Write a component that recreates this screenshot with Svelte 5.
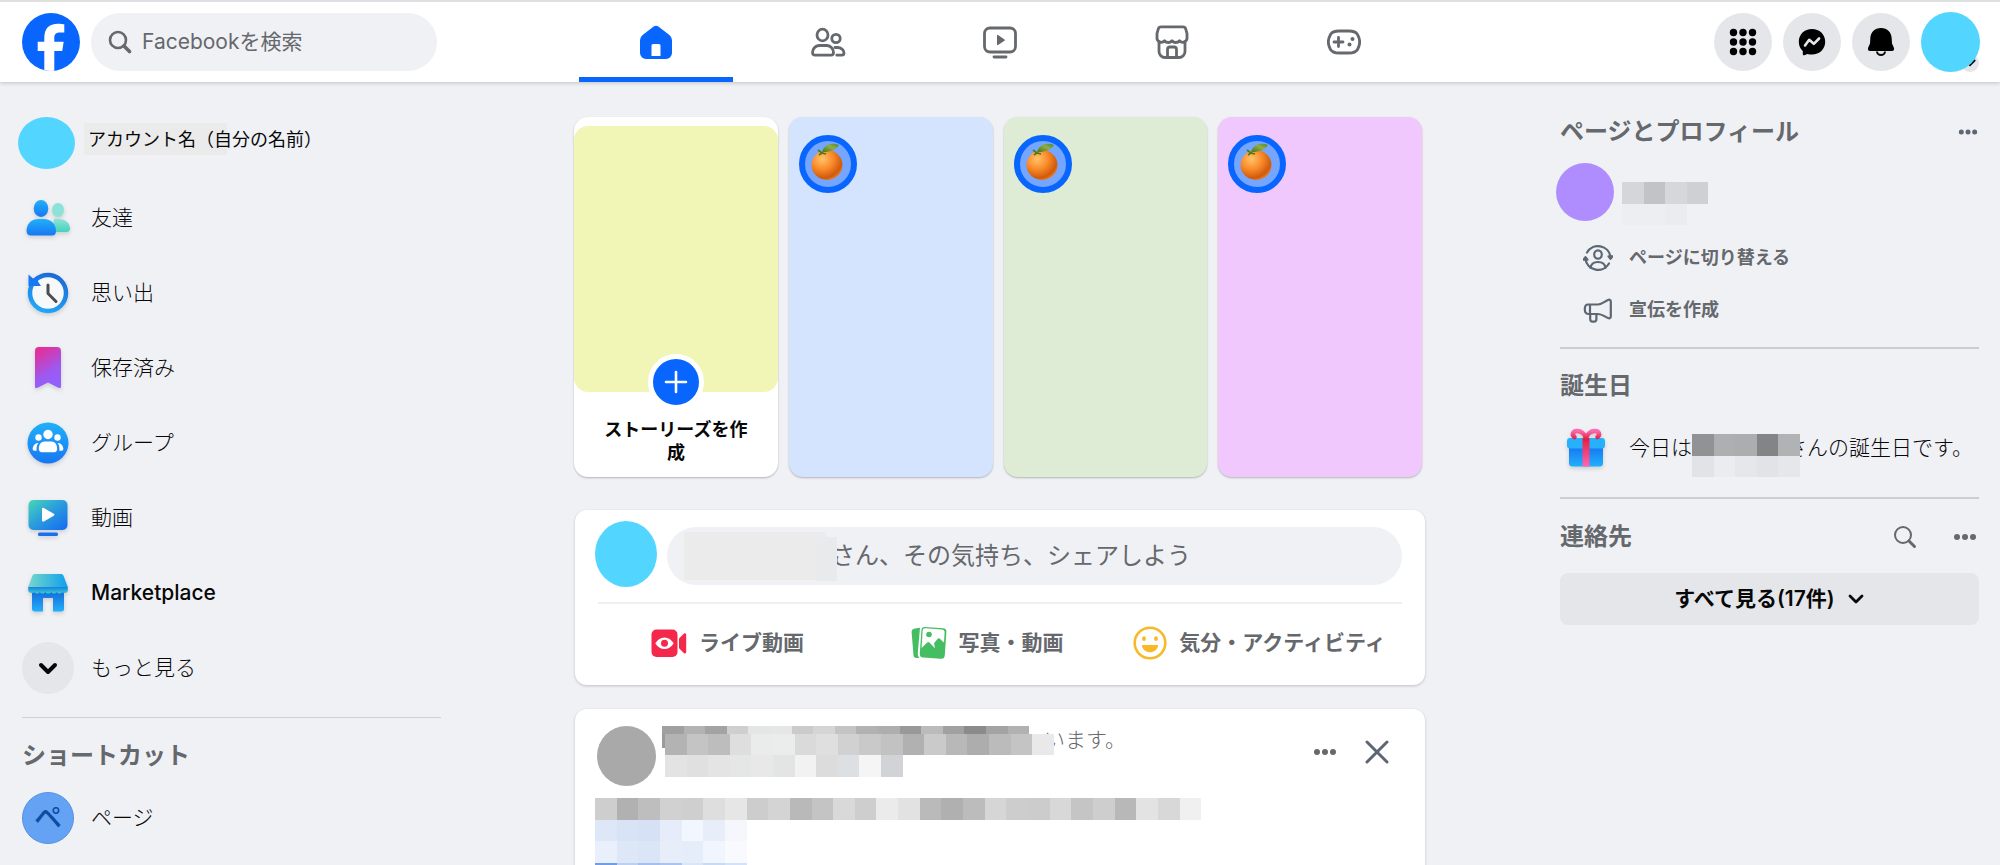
<script lang="ts">
  const menu = [
    { id: 'friends', label: '友達' },
    { id: 'memories', label: '思い出' },
    { id: 'saved', label: '保存済み' },
    { id: 'groups', label: 'グループ' },
    { id: 'video', label: '動画' },
    { id: 'market', label: 'Marketplace' },
    { id: 'more', label: 'もっと見る' }
  ];

  const tabs = [
    { id: 'home', label: 'ホーム' },
    { id: 'friends', label: '友達' },
    { id: 'video', label: '動画' },
    { id: 'market', label: 'Marketplace' },
    { id: 'games', label: 'ゲーム' }
  ];

  const stories = ['blue', 'green', 'pink'];

  // each row: x, y, height and the grey of every block
  const postName = [
    { x: 0, y: 0, h: 22, cells: ['#9b9b9b'], w: 3 },
    { x: 0, y: 0, h: 8, cells: ['#a0a0a0', '#b2b2b2', '#a3a3a3', '#cfcfcf', '#e3e6e5', '#e5e6e6', '#cbcbcb', '#d5d5d5', '#c4c4c4', '#b2b2b2', '#aeaeae', '#999', '#bbb', '#a1a1a1', '#8b8b8b', '#a3a3a3', '#b1b1b1'] },
    { x: 3, y: 8, h: 21, cells: ['#b3b3b3', '#c4c4c4', '#bdbdbd', '#dedede', '#eaeceb', '#ebecec', '#dadada', '#dfdfdf', '#d1d1d1', '#c9c9c9', '#c2c2c2', '#b1b1b1', '#cacaca', '#b8b8b8', '#adadad', '#bbb', '#c4c4c4', '#e9e9e9'] },
    { x: 3, y: 29, h: 22, cells: ['#e3e3e3', '#e0e0e0', '#e4e4e4', '#e5e7e6', '#e8e8e8', '#e2e5e4', '#f2f2f2', '#dcdcdc', '#dde0e2', '#f5f5f5', '#d2d3d6'] }
  ];

  const postBody = [
    { x: 0, y: 0, h: 22, cells: ['#cecece', '#b1b1b1', '#bebebe', '#d1d1d1', '#cfcfcf', '#dedede', '#e6e6e6', '#cdcdcd', '#d4d4d4', '#b9b9b9', '#c4c4c4', '#d9d9d9', '#cecece', '#ebebeb', '#e2e2e2', '#bababa', '#b0b0b0', '#bcbcbc', '#d6d6d6', '#cdcdcd', '#cccccc', '#d8d8d8', '#c5c5c5', '#cecece', '#b8b8b8', '#e3e3e3', '#d8d8d8', '#f0f0f0'] },
    { x: 0, y: 22, h: 21, cells: ['#dde7f8', '#d8e3f6', '#d6e1f6', '#e6ecf9', '#f2f6fe', '#e7edf9', '#f5f7fc'] },
    { x: 0, y: 43, h: 22, cells: ['#e9effb', '#dde7f7', '#dae6f7', '#e8edfa', '#e5ecfa', '#f1f5fe', '#f8fafe'] },
    { x: 0, y: 65, h: 21, cells: ['#6f9de6', '#bcd1f2', '#a3c0ef', '#a9c4f0', '#d9e5f8', '#c9daf5', '#d2e2fa'] }
  ];

  const pageName = [
    { x: 0, y: 0, h: 22, cells: ['#d5d6da', '#c2c3c6', '#d6d7da', '#cfd0d2'] },
    { x: 0, y: 22, h: 21, cells: ['#edeef1', '#edeef1', '#ebecef'] }
  ];

  const birthdayName = [
    { x: 0, y: 0, h: 22, cells: ['#919293', '#aeafb0', '#acadae', '#838485', '#b1b2b3'] },
    { x: 0, y: 22, h: 21, cells: ['#e2e3e6', '#ebecef', '#e6e7ea', '#e2e3e6', '#e6e7ea'] }
  ];

  let activeTab = 'home';
</script>

{#snippet blocks(rows, width, height, cell)}
  <svg class="blocks" {width} {height} viewBox="0 0 {width} {height}" shape-rendering="crispEdges" aria-hidden="true">
    {#each rows as row}
      {#each row.cells as color, i}
        <rect x={row.x + i * cell} y={row.y} width={row.w ?? cell} height={row.h} fill={color} />
      {/each}
    {/each}
  </svg>
{/snippet}

{#snippet searchIcon(width)}
  <svg width="24" height="24" viewBox="0 0 24 24" fill="none" stroke="#65686c" stroke-linecap="round">
    <circle cx="10" cy="10" r="8" stroke-width={width} />
    <path d="M16 16l5.500 5.500" stroke-width={width + 1} />
  </svg>
{/snippet}

{#snippet dots()}
  <svg width="24" height="8" viewBox="0 0 24 8">
    <circle cx="4" cy="4" r="3" /><circle cx="12" cy="4" r="3" /><circle cx="20" cy="4" r="3" />
  </svg>
{/snippet}

{#snippet orange()}
  <svg width="36" height="42" viewBox="0 0 36 42">
    <defs>
      <radialGradient id="peel" cx="0.35" cy="0.3" r="0.75">
        <stop offset="0" stop-color="#ffc46b" />
        <stop offset="0.45" stop-color="#fb8c2b" />
        <stop offset="0.85" stop-color="#cf5a0c" />
        <stop offset="1" stop-color="#ee7d1c" />
      </radialGradient>
      <linearGradient id="leaf" x1="0" y1="1" x2="1" y2="0">
        <stop offset="0" stop-color="#3f7212" />
        <stop offset="0.6" stop-color="#8fae4d" />
        <stop offset="1" stop-color="#4c8420" />
      </linearGradient>
    </defs>
    <ellipse cx="17" cy="25" rx="15.500" ry="15" fill="url(#peel)" />
    <path d="M12 13c1-8 9-11 17-8-3 5-9 7-15 7z" fill="url(#leaf)" />
    <path d="M8 10l4 3-3 2M12 13l4 1" fill="none" stroke="#4b7b18" stroke-width="1.600" />
  </svg>
{/snippet}

<div class="app">
  <header class="topbar">
    <div class="brand">
      <a class="logo" href="#home" aria-label="Facebook">
        <svg width="58" height="58" viewBox="0 0 58 58">
          <clipPath id="disc"><circle cx="29" cy="29" r="29" /></clipPath>
          <circle cx="29" cy="29" r="29" fill="#0866ff" />
          <path clip-path="url(#disc)" fill="#fff" d="M22.300 58V38h-6.600v-9.300h6.600V25c0-9.500 4.700-14.300 13.700-14.300 2.600 0 5 .3 6.300.6v8.200h-3.800c-4.500 0-6.200 1.500-6.200 5.500v3.700h9.400L40.200 38h-7.900v20z" />
        </svg>
      </a>
      <label class="search">
        {@render searchIcon(2.6)}
        <input type="text" placeholder="Facebookを検索" aria-label="Facebookを検索" />
      </label>
    </div>

    <nav class="tabs">
      {#each tabs as tab}
        <a class="tab" class:active={tab.id === activeTab} href="#{tab.id}" aria-label={tab.label}>
          {#if tab.id === 'home'}
            <svg width="34" height="34" viewBox="0 0 34 34">
              <path fill="#0866ff" fill-rule="evenodd" d="M14.300 1.800a4.500 4.500 0 0 1 5.400 0l10 7.700A8 8 0 0 1 33 15.800V28a6 6 0 0 1-6 6H7a6 6 0 0 1-6-6V15.800a8 8 0 0 1 3.300-6.300zM14 19a1.500 1.500 0 0 0-1.500 1.500V31h9V20.500A1.500 1.500 0 0 0 20 19z" />
            </svg>
          {:else if tab.id === 'friends'}
            <svg class="line" width="36" height="34" viewBox="0 0 36 34">
              <ellipse cx="12.500" cy="10" rx="5.500" ry="5.800" />
              <circle cx="26" cy="13.500" r="4.200" />
              <path d="M9 20.500h8a7 7 0 0 1 6.500 7c0 1.800-1 2.700-2.500 2.700H5c-1.500 0-2.500-.9-2.500-2.700a7 7 0 0 1 6.500-7zM25 22.500h2.500c3.500 0 6.500 2.500 6.500 5.500 0 1.400-.8 2.200-2.200 2.200h-5" />
            </svg>
          {:else if tab.id === 'video'}
            <svg class="line" width="34" height="34" viewBox="0 0 34 34">
              <rect x="1.500" y="3" width="31" height="24" rx="5.500" />
              <path d="M11 32h12" />
              <path class="solid" d="M14 10.500v9a.6.6 0 0 0 1 .5l6.500-4.300a.8.8 0 0 0 0-1.300L15 10a.6.6 0 0 0-1 .5z" />
            </svg>
          {:else if tab.id === 'market'}
            <svg class="line" width="34" height="34" viewBox="0 0 34 34">
              <path d="M6 1.800h22a2.800 2.800 0 0 1 2.700 2L32 8.500v4a4.300 4.300 0 0 1-7.500 3.300 5 5 0 0 1-7.500 0 5 5 0 0 1-7.500 0A4.300 4.300 0 0 1 2 12.500v-4L3.300 3.800A2.800 2.800 0 0 1 6 1.800z" />
              <path d="M4 17v9.500a6 6 0 0 0 6 6h14a6 6 0 0 0 6-6V17M12.500 32v-7.500a2.500 2.500 0 0 1 2.500-2.500h4a2.500 2.500 0 0 1 2.500 2.500V32" />
            </svg>
          {:else}
            <svg class="line" width="34" height="26" viewBox="0 0 34 26">
              <path d="M12 2h10c5 0 7 1 8.500 3.500 2.600 4.500 2.600 10.500 0 15C29 23 27 24 22 24H12c-5 0-7-1-8.500-3.500-2.600-4.500-2.600-10.500 0-15C5 3 7 2 12 2zM11.500 8.500v9M7 13h9" />
              <circle class="solid" cx="25.500" cy="10" r="2" />
              <circle class="solid" cx="22.500" cy="15.500" r="2" />
            </svg>
          {/if}
        </a>
      {/each}
    </nav>

    <div class="actions">
      <button class="round" aria-label="メニュー">
        <svg width="28" height="28" viewBox="0 0 28 28">
          {#each [4.5, 14, 23.5] as y}
            {#each [4.5, 14, 23.5] as x}
              <circle cx={x} cy={y} r="3.700" />
            {/each}
          {/each}
        </svg>
      </button>
      <button class="round" aria-label="Messenger">
        <svg width="28" height="28" viewBox="0 0 28 28">
          <path d="M14 1C6.500 1 .8 6.400.8 13.800c0 3.800 1.500 7 4 9.300V26c0 1 .7 1.500 1.600 1.200l3-1.300c1.400.5 3 .7 4.600.7 7.500 0 13.200-5.400 13.200-12.800S21.500 1 14 1z" />
          <path d="M7 17.500l4.200-5.700 4.600 4 5.300-5.300" fill="none" stroke="#e4e6ea" stroke-width="2.600" stroke-linecap="round" stroke-linejoin="round" />
        </svg>
      </button>
      <button class="round" aria-label="お知らせ">
        <svg width="28" height="30" viewBox="0 0 28 30">
          <path d="M14 1C7.500 1 3.500 5.500 3.300 11.500L3 16.500l-1.900 4.300C.5 22.500 1.200 24 3 24h22c1.800 0 2.500-1.500 1.900-3.200L25 16.500l-.3-5C24.500 5.500 20.500 1 14 1z" />
          <path d="M10 24.500a4 3.500 0 0 0 8 0" fill="none" stroke="#080809" stroke-width="2" />
        </svg>
      </button>
      <button class="profile" aria-label="アカウント">
        <span class="badge">
          <svg width="18" height="18" viewBox="0 0 18 18" fill="none" stroke="#080809" stroke-width="2.200" stroke-linecap="round"><path d="M4.500 6.500l4.500 4.500 4.500-4.500" /></svg>
        </span>
        <span class="face"></span>
      </button>
    </div>
  </header>

  <div class="page">
    <aside class="left">
      <a class="row account" href="#me">
        <span class="slot"><span class="avatar wide"></span></span>
        <span class="name"><span>アカウント名（自分の名前）</span></span>
      </a>
      {#each menu as item}
        <a class="row" href="#{item.id}">
          <span class="slot" class:disc={item.id === 'more'}>
            {#if item.id === 'friends'}
              <svg class="shade" width="46" height="38" viewBox="0 0 46 38">
                <defs>
                  <linearGradient id="sky" x1="0" y1="0" x2="0" y2="1"><stop offset="0" stop-color="#20b0fb" /><stop offset="1" stop-color="#1877f2" /></linearGradient>
                  <linearGradient id="mint" x1="0" y1="0" x2="0" y2="1"><stop offset="0" stop-color="#8fe0d8" /><stop offset="1" stop-color="#42d5ba" /></linearGradient>
                </defs>
                <ellipse cx="33" cy="11" rx="6" ry="7" fill="#8ae3d6" />
                <path d="M29 20h5c6 0 11 4 11 9.500 0 2-1.200 3.500-3.500 3.500H27z" fill="url(#mint)" />
                <ellipse cx="16" cy="9.500" rx="7.300" ry="8.500" fill="url(#sky)" />
                <path d="M13 20h6c7 0 12 5 12 12 0 3-1.500 4.500-4 4.500H6c-2.500 0-4.500-1.500-4.500-4.500 0-7 4.500-12 11.500-12z" fill="url(#sky)" />
              </svg>
            {:else if item.id === 'memories'}
              <svg class="shade" width="42" height="42" viewBox="0 0 42 42">
                <defs>
                  <linearGradient id="clock" x1="0.700" y1="0" x2="0.300" y2="1"><stop offset="0" stop-color="#1a6bd8" /><stop offset="1" stop-color="#20a7f8" /></linearGradient>
                </defs>
                <circle cx="21" cy="21" r="18" fill="#f7f8fa" stroke="url(#clock)" stroke-width="4.500" />
                <path d="M1.500 2.500l4.500 4 5-3v6l3 4.500H1.500z" fill="#1877f2" />
                <path d="M21 13v8.500l8 8" fill="none" stroke="#4b4c4f" stroke-width="3" stroke-linecap="round" />
              </svg>
            {:else if item.id === 'saved'}
              <svg class="shade" width="28" height="44" viewBox="0 0 28 44">
                <defs>
                  <linearGradient id="ribbon" x1="0.300" y1="0" x2="0.700" y2="1"><stop offset="0" stop-color="#e62e9a" /><stop offset="0.650" stop-color="#9a5bf3" /><stop offset="1" stop-color="#9260fc" /></linearGradient>
                </defs>
                <path d="M5 1h18a4 4 0 0 1 4 4v35.500c0 1.500-1 2-2.500 1.300L14 36.500 3.500 41.800C2 42.500 1 42 1 40.500V5a4 4 0 0 1 4-4z" fill="url(#ribbon)" />
              </svg>
            {:else if item.id === 'groups'}
              <svg class="shade" width="42" height="42" viewBox="0 0 42 42">
                <circle cx="21" cy="21" r="20.500" fill="url(#sky)" />
                <g fill="#fff">
                  <circle cx="21" cy="12.500" r="4.700" />
                  <circle cx="11.500" cy="15.500" r="3.200" /><circle cx="30.500" cy="15.500" r="3.200" />
                  <path d="M17.500 19.500h7c3.500 0 5.700 3 5.700 7.500 0 2-.8 3.200-3 3.200H15c-2.200 0-3.200-1.200-3.200-3.200 0-4.500 2.200-7.500 5.700-7.500zM11.500 21c-1.700 2-2.300 4.500-1.800 7.800H7.500c-1.500 0-2-1-1.800-2.500C6.200 23 8.300 21 11.500 21zM30.500 21c1.700 2 2.300 4.500 1.800 7.800h2.200c1.500 0 2-1 1.800-2.500-.5-3.300-2.600-5.300-5.800-5.300z" />
                </g>
              </svg>
            {:else if item.id === 'video'}
              <svg class="shade" width="40" height="38" viewBox="0 0 40 38">
                <defs>
                  <linearGradient id="screen" x1="0" y1="0" x2="1" y2="1"><stop offset="0" stop-color="#46d8b8" /><stop offset="0.450" stop-color="#2c9fdb" /><stop offset="1" stop-color="#1469f2" /></linearGradient>
                </defs>
                <rect x="0.500" y="1" width="39" height="30" rx="5" fill="url(#screen)" />
                <rect x="10" y="33.500" width="20" height="3.500" rx="1.500" fill="#1a6ff0" />
                <path d="M14 10v11.500c0 1 1 1.500 1.800 1l10-5.700a1.200 1.200 0 0 0 0-2.100l-10-5.700c-.8-.5-1.800 0-1.800 1z" fill="#fff" />
              </svg>
            {:else if item.id === 'market'}
              <svg class="shade" width="42" height="40" viewBox="0 0 42 40">
                <defs>
                  <linearGradient id="awning" x1="0" y1="0" x2="1" y2="0"><stop offset="0" stop-color="#74d8c8" /><stop offset="1" stop-color="#0f9fee" /></linearGradient>
                  <linearGradient id="walls" x1="0" y1="0" x2="0" y2="1"><stop offset="0" stop-color="#1565d8" /><stop offset="1" stop-color="#20b0fb" /></linearGradient>
                  <linearGradient id="edge" x1="0" y1="0" x2="0" y2="1"><stop offset="0" stop-color="#1a7ce8" /><stop offset="1" stop-color="#38d0c8" /></linearGradient>
                </defs>
                <path d="M5 17h32v19c0 1.500-.8 2.500-2.500 2.500H26V25H16v13.500H8c-2 0-3-1-3-2.500z" fill="url(#walls)" />
                <path d="M1.200 14h39.600v4c-.5 2-4.500 3-5.500 1-1 2-4.500 2-5.500 0-1 2-4.500 2-5.500 0-1 2-5 2-6 0-1 2-4.500 2-5.500 0-1 2-4.500 2-5.500 0-1 2-5.500 1-6-1z" fill="url(#edge)" />
                <path d="M8 1h26c1.200 0 2 .6 2.400 1.600L40.800 14H1.200L5.600 2.600C6 1.600 6.800 1 8 1z" fill="url(#awning)" />
              </svg>
            {:else}
              <svg width="24" height="24" viewBox="0 0 24 24" fill="none" stroke="#080809" stroke-width="4" stroke-linecap="round" stroke-linejoin="round"><path d="M5 9l7 7 7-7" /></svg>
            {/if}
          </span>
          <span class="label" class:latin={item.id === 'market'}>{item.label}</span>
        </a>
      {/each}
      <hr />
      <h2 class="heading">ショートカット</h2>
      <a class="row" href="#page">
        <span class="slot shortcut">ペ</span>
        <span class="label">ページ</span>
      </a>
    </aside>

    <main>
      <section class="stories">
        <a class="story create" href="#create">
          <span class="cover"></span>
          <span class="plus">
            <svg width="24" height="24" viewBox="0 0 24 24" stroke="#fff" stroke-width="2.600" stroke-linecap="round"><path d="M12 2v20M2 12h20" /></svg>
          </span>
          <span class="caption">ストーリーズを作成</span>
        </a>
        {#each stories as color}
          <a class="story {color}" href="#story-{color}" aria-label="ストーリーズ">
            <span class="ring">{@render orange()}</span>
          </a>
        {/each}
      </section>

      <section class="card composer">
        <div class="prompt">
          <span class="avatar tall"></span>
          <button class="field"><span class="mask"></span>さん、その気持ち、シェアしよう</button>
        </div>
        <div class="kinds">
          <button>
            <svg width="36" height="32" viewBox="0 0 36 32">
              <rect x="0.500" y="2.500" width="26" height="27.500" rx="5" fill="#f3284a" />
              <path d="M28.500 11l4-4c1.200-1.200 2.700-.7 2.700 1v17c0 1.500-1.500 2-2.700.8l-4-4c-.4-.4-.5-.8-.5-1.300v-8.200c0-.5.1-.9.500-1.300z" fill="#f3284a" />
              <path d="M4.300 16.200c2.200-3.600 5.400-5.800 9.200-5.800s7 2.200 9.200 5.800c-2.200 3.600-5.400 5.800-9.200 5.800s-7-2.200-9.200-5.800z" fill="#fff" />
              <circle cx="13.500" cy="16.200" r="3.500" fill="#f3284a" />
            </svg>
            ライブ動画
          </button>
          <button>
            <svg width="36" height="34" viewBox="0 0 36 34">
              <path d="M4 2.500l5-.8L6.800 27c-.1 2 .4 3.600 1.500 5H5.500c-1.800 0-2.800-1-3-2.800L.6 6C.5 4 1.800 2.800 4 2.500z" fill="#45bd62" />
              <path d="M14 1l18 1.200c2.500.2 3.500 1.500 3.400 3.500l-1.600 23.500c-.2 2.500-1.500 3.700-4 3.500l-17.500-1.200c-2.500-.2-3.700-1.600-3.500-3.800L10.400 4.200C10.600 2 11.800.9 14 1z" fill="#45bd62" />
              <path d="M14.300 2.200l16.500 1.200c2 .2 3 1.200 2.800 3L33 16.500l-4.200-3.800c-.8-.7-1.600-.6-2.300.2L23 17.300l1 5-5.600-5.700c-.8-.8-1.500-.8-2.200 0L10.600 22l1-17c.1-2 1-3 2.700-2.800z" fill="#fff" />
              <circle cx="18" cy="8.500" r="2.800" fill="#45bd62" />
            </svg>
            写真・動画
          </button>
          <button>
            <svg width="34" height="34" viewBox="0 0 34 34">
              <circle cx="17" cy="17" r="15.300" fill="none" stroke="#f7b928" stroke-width="2.600" />
              <ellipse cx="11" cy="12.700" rx="1.900" ry="2.400" fill="#f7b928" /><ellipse cx="23" cy="12.700" rx="1.900" ry="2.400" fill="#f7b928" />
              <path d="M10 19h14c.8 0 1.200.5 1 1.300-1 3.700-4 6-8 6s-7-2.300-8-6c-.2-.8.2-1.300 1-1.300z" fill="#f7b928" />
            </svg>
            気分・アクティビティ
          </button>
        </div>
      </section>

      <article class="card post">
        <header class="post-head">
          <span class="avatar gray"></span>
          <p class="byline">{@render blocks(postName, 392, 52, 21.6)}<span>います。</span></p>
          <button class="icon" aria-label="その他">{@render dots()}</button>
          <button class="icon" aria-label="閉じる">
            <svg width="24" height="24" viewBox="0 0 24 24" stroke="#5c6773" stroke-width="3" stroke-linecap="round"><path d="M2 2l20 20M22 2L2 22" /></svg>
          </button>
        </header>
        {@render blocks(postBody, 608, 90, 21.65)}
      </article>
    </main>

    <aside class="right">
      <div class="title">
        <h2 class="heading">ページとプロフィール</h2>
        <button class="icon slate" aria-label="その他">{@render dots()}</button>
      </div>
      <a class="owner" href="#my-page" aria-label="ページ">
        <span class="avatar purple"></span>
        {@render blocks(pageName, 87, 44, 21.6)}
      </a>
      <a class="sub" href="#switch">
        <svg width="30" height="30" viewBox="0 0 30 30" fill="none" stroke="#5c6773" stroke-width="2.200" stroke-linecap="round" stroke-linejoin="round">
          <path d="M4 9.500A12.700 12.700 0 0 1 27.600 14M2.400 16A12.700 12.700 0 0 0 26 20.500" />
          <ellipse cx="15" cy="11.500" rx="3.800" ry="4.200" />
          <path d="M7.500 25c.5-4 3.500-6 7.500-6s7 2 7.500 6" />
          <path d="M25.500 13.300h4l-2 2.500zM.5 16.700h4l-2-2.500z" fill="#5c6773" />
        </svg>
        ページに切り替える
      </a>
      <a class="sub" href="#promote">
        <svg width="30" height="26" viewBox="0 0 30 26" fill="none" stroke="#5c6773" stroke-width="2.200" stroke-linejoin="round">
          <path d="M5 7.500h10c4 0 6.500-3 10-4.500 1.700-.7 2.800 0 2.800 1.500v15c0 1.500-1.100 2.200-2.800 1.500-3.500-1.500-6-4-10-4H5c-2 0-3.200-1.800-3.200-4.700S3 7.500 5 7.500z" />
          <path d="M7 7.500v9.400M7.200 17v5c0 1.800.8 2.600 2.300 2.600h1.600c1.500 0 2.300-.8 2.300-2.600v-5" />
        </svg>
        宣伝を作成
      </a>
      <hr />
      <h2 class="heading birthday-title">誕生日</h2>
      <a class="birthday" href="#birthdays">
        <svg class="shade" width="40" height="40" viewBox="0 0 40 40">
          <defs>
            <linearGradient id="bow" x1="0" y1="0" x2="0" y2="1"><stop offset="0" stop-color="#fb6ab0" /><stop offset="1" stop-color="#e41e3f" /></linearGradient>
            <linearGradient id="box" x1="0" y1="0" x2="0" y2="1"><stop offset="0" stop-color="#1877f2" /><stop offset="1" stop-color="#20b0fb" /></linearGradient>
            <linearGradient id="band" x1="0" y1="0" x2="0" y2="1"><stop offset="0" stop-color="#e41e3f" /><stop offset="1" stop-color="#fd67b3" /></linearGradient>
          </defs>
          <path d="M3 19h34v16a3.500 3.500 0 0 1-3.500 3.500h-27A3.500 3.500 0 0 1 3 35z" fill="url(#box)" />
          <rect x="1" y="10" width="38" height="10.500" rx="3" fill="#27b0fb" />
          <rect x="16.500" y="10" width="7" height="28.500" fill="url(#band)" />
          <path d="M20 11c-1-5.500-5-8-9-8S5.500 6.500 8.500 9M20 11c1-5.500 5-8 9-8s5.500 3.500 2.500 6" fill="none" stroke="url(#bow)" stroke-width="4.500" stroke-linecap="round" />
        </svg>
        <span class="wish label">今日は<span class="gap">{@render blocks(birthdayName, 108, 44, 21.6)}</span>さんの誕生日です。</span>
      </a>
      <hr />
      <div class="title contacts">
        <h2 class="heading">連絡先</h2>
        <button class="icon find" aria-label="検索">{@render searchIcon(2)}</button>
        <button class="icon" aria-label="その他">{@render dots()}</button>
      </div>
      <button class="all">
        すべて見る(17件)
        <svg width="18" height="18" viewBox="0 0 18 18" fill="none" stroke="#080809" stroke-width="2.800" stroke-linecap="round" stroke-linejoin="round"><path d="M3 6l6 6 6-6" /></svg>
      </button>
    </aside>
  </div>
</div>

<style>
  :global(body) {
    background: #f0f1f5;
  }

  .app {
    height: 100vh;
    overflow: hidden;
    color: #080809;
    font-family: Inter, "Noto Sans CJK JP", sans-serif;
    font-size: 21px;
    line-height: 28px;
  }

  svg {
    display: block;
    flex: none;
  }

  a {
    color: inherit;
    text-decoration: none;
  }

  button {
    border: none;
    padding: 0;
    background: none;
    font: inherit;
    color: inherit;
    cursor: pointer;
  }

  hr {
    height: 1px;
    margin: 0;
    border: none;
    background: #ced0d5;
  }

  .avatar {
    flex: none;
    border-radius: 50%;
    background: #52d6ff;
  }

  .heading {
    margin: 0;
    font-size: 24px;
    line-height: 32px;
    font-weight: 600;
    color: #65686c;
  }

  .label {
    font-weight: 300;
  }

  .icon {
    display: flex;
    fill: #65686c;
  }

  .icon.slate {
    margin-right: 1px;
    fill: #5c6773;
  }

  .slate svg {
    width: 20px;
  }

  /* top bar */
  .topbar {
    position: relative;
    display: grid;
    grid-template-columns: 1fr auto 1fr;
    align-items: center;
    height: 80px;
    padding: 0 20px 0 22px;
    border-top: 2px solid #dedfe1;
    background: #fff;
    box-shadow: 0 1px 4px rgba(0, 0, 0, 0.2);
  }

  .brand,
  .actions {
    display: flex;
    align-items: center;
    gap: 11px;
  }

  .actions {
    justify-content: flex-end;
  }

  .search {
    display: flex;
    align-items: center;
    gap: 10px;
    width: 346px;
    height: 58px;
    padding: 0 17px;
    box-sizing: border-box;
    border-radius: 29px;
    background: #f0f1f5;
  }

  .search input {
    flex: 1;
    min-width: 0;
    padding: 0;
    border: none;
    outline: none;
    background: none;
    font: inherit;
    color: #080809;
  }

  .search input::placeholder {
    color: #65686c;
    opacity: 1;
  }

  .tabs {
    display: flex;
    gap: 18px;
    height: 100%;
    padding-right: 2px;
  }

  .tab {
    display: flex;
    align-items: center;
    justify-content: center;
    width: 154px;
    border-top: 5px solid transparent;
    border-bottom: 5px solid transparent;
    box-sizing: border-box;
  }

  .tab.active {
    border-bottom-color: #0866ff;
  }

  .line {
    fill: none;
    stroke: #65686c;
    stroke-width: 2.8;
    stroke-linecap: round;
    stroke-linejoin: round;
  }

  .solid {
    fill: #65686c;
    stroke: none;
  }

  .round {
    display: flex;
    align-items: center;
    justify-content: center;
    width: 58px;
    height: 58px;
    border-radius: 50%;
    background: #e4e6ea;
  }

  .profile {
    position: relative;
    width: 59px;
    height: 60px;
  }

  .face {
    position: absolute;
    inset: 0;
    border-radius: 50%;
    background: #52d6ff;
  }

  .badge {
    position: absolute;
    right: 1px;
    bottom: 0;
    border-radius: 50%;
    background: #e4e6ea;
  }

  /* columns */
  .page {
    display: grid;
    grid-template-columns: 1fr minmax(0, 850px) 1fr;
    align-items: start;
  }

  .left {
    width: 419px;
    padding: 23px 0 0 22px;
  }

  .row {
    display: flex;
    align-items: center;
    gap: 17px;
    height: 75px;
  }

  .row.account {
    gap: 16px;
    margin-left: -2px;
    font-size: 18px;
  }

  .slot {
    display: flex;
    flex: none;
    align-items: center;
    justify-content: center;
    width: 52px;
    height: 52px;
    border-radius: 50%;
  }

  .shade {
    filter: drop-shadow(0 2px 2px rgba(0, 0, 0, 0.15));
    overflow: visible;
  }

  .disc {
    background: #e4e6ea;
  }

  .latin {
    font-weight: 500;
  }

  .shortcut {
    box-sizing: border-box;
    border: 1px solid #5792e3;
    background: #64a2f4;
    color: #0c4ca3;
    font-size: 28px;
    font-weight: 500;
  }

  .wide {
    width: 57px;
    height: 52px;
  }

  .name {
    position: relative;
    padding-bottom: 6px;
  }

  .name span {
    position: relative;
  }

  .name::before {
    content: '';
    position: absolute;
    top: -3px;
    left: -4px;
    width: 143px;
    height: 32px;
    background: #ebebeb;
  }

  .left hr {
    margin: 12px 0 22px;
  }

  .left .heading {
    margin-bottom: 8px;
  }

  /* stories */
  main {
    padding-top: 35px;
  }

  .stories {
    display: grid;
    grid-template-columns: repeat(4, 1fr);
    gap: 11px;
    margin: 0 3px 0 -1px;
  }

  .story {
    position: relative;
    height: 360px;
    border-radius: 14px;
    box-shadow: 0 1px 2px rgba(0, 0, 0, 0.25);
  }

  .blue {
    background: #d4e3fe;
  }

  .green {
    background: #dfecd5;
  }

  .pink {
    background: #f1c8fd;
  }

  .create {
    display: flex;
    flex-direction: column;
    align-items: center;
    padding-top: 9px;
    box-sizing: border-box;
    background: #fff;
  }

  .cover {
    width: 100%;
    height: 266px;
    border-radius: 14px;
    background: #f1f6b7;
  }

  .plus {
    display: flex;
    align-items: center;
    justify-content: center;
    width: 46px;
    height: 46px;
    margin-top: -38px;
    border: 5px solid #fff;
    border-radius: 50%;
    background: #0866ff;
  }

  .caption {
    padding: 8px 24px;
    font-size: 18px;
    line-height: 23px;
    font-weight: 600;
    text-align: center;
  }

  .ring {
    position: absolute;
    top: 18px;
    left: 10px;
    display: flex;
    align-items: center;
    justify-content: center;
    width: 46px;
    height: 46px;
    border: 6px solid #0866ff;
    border-radius: 50%;
    background: #74a5ff;
  }

  .ring svg {
    margin-bottom: 6px;
  }

  /* feed cards */
  .card {
    border-radius: 12px;
    background: #fff;
    box-shadow: 0 1px 3px rgba(0, 0, 0, 0.2);
  }

  .composer {
    margin-top: 33px;
    padding: 11px 23px 18px 20px;
  }

  .prompt {
    display: flex;
    align-items: flex-end;
    gap: 10px;
  }

  .tall {
    width: 62px;
    height: 66px;
  }

  .field {
    display: flex;
    flex: 1;
    align-items: center;
    height: 58px;
    margin-bottom: 2px;
    padding-left: 17px;
    border-radius: 29px;
    background: #f0f1f5;
    color: #65686c;
    font-size: 24px;
  }

  .mask {
    position: relative;
    width: 147px;
    height: 48px;
  }

  .mask::before,
  .mask::after {
    content: '';
    position: absolute;
    top: 0;
    left: 0;
    width: 142px;
    height: 48px;
    background: #ebebeb;
  }

  .mask::after {
    top: 5px;
    left: 132px;
    width: 21px;
    height: 44px;
    background: #e9eaeb;
  }

  .kinds {
    display: grid;
    grid-template-columns: 259fr 260fr 285fr;
    margin: 15px 0 0 3px;
    padding-top: 15px;
    border-top: 2px solid #eff0f2;
  }

  .kinds button {
    display: flex;
    align-items: center;
    justify-content: center;
    gap: 12px;
    height: 48px;
    color: #65686c;
    font-weight: 600;
  }

  .post {
    margin-top: 24px;
    padding: 17px 20px 200px;
  }

  .post-head {
    display: flex;
    align-items: flex-start;
    margin-bottom: 12px;
    padding-left: 2px;
  }

  .gray {
    width: 59px;
    height: 60px;
    margin-right: 6px;
    background: #a9a9a9;
  }

  .byline {
    display: flex;
    flex: 1;
    margin: 0;
    color: #65686c;
  }

  .byline span {
    margin-left: -10px;
    font-weight: 300;
  }

  .byline svg {
    position: relative;
    z-index: 1;
  }

  .post-head .icon {
    align-items: center;
    height: 52px;
    margin-left: 28px;
  }

  .post-head .icon:last-child {
    margin-right: 16px;
  }

  /* right column */
  .right {
    justify-self: end;
    width: 419px;
    padding: 34px 21px 0 0;
  }

  .title {
    display: flex;
    align-items: center;
    justify-content: space-between;
  }

  .owner {
    display: flex;
    align-items: flex-start;
    gap: 8px;
    margin: 15px 0 6px -4px;
  }

  .owner svg {
    margin-top: 19px;
  }

  .purple {
    width: 58px;
    height: 58px;
    background: #b08dff;
  }

  .sub {
    display: flex;
    align-items: center;
    gap: 16px;
    height: 52px;
    padding-left: 23px;
    color: #65686c;
    font-size: 18px;
    font-weight: 600;
  }

  .right hr {
    height: 2px;
    background: #cbcdd2;
  }

  .sub + hr {
    margin-top: 11px;
  }

  .birthday-title {
    margin: 21px 0 24px;
  }

  .birthday {
    display: flex;
    align-items: center;
    gap: 23px;
    height: 44px;
    margin-bottom: 27px;
    padding-left: 6px;
  }

  .wish {
    display: flex;
    white-space: nowrap;
  }

  .gap {
    width: 94px;
    height: 28px;
  }

  .gap svg {
    position: relative;
  }

  .contacts {
    margin: 22px 0 20px;
    padding-right: 2px;
  }

  .find {
    margin-left: auto;
    margin-right: 36px;
  }

  .all {
    display: flex;
    align-items: center;
    justify-content: center;
    gap: 12px;
    width: 100%;
    height: 52px;
    border-radius: 8px;
    background: #e4e6ea;
    font-weight: 600;
  }
</style>
